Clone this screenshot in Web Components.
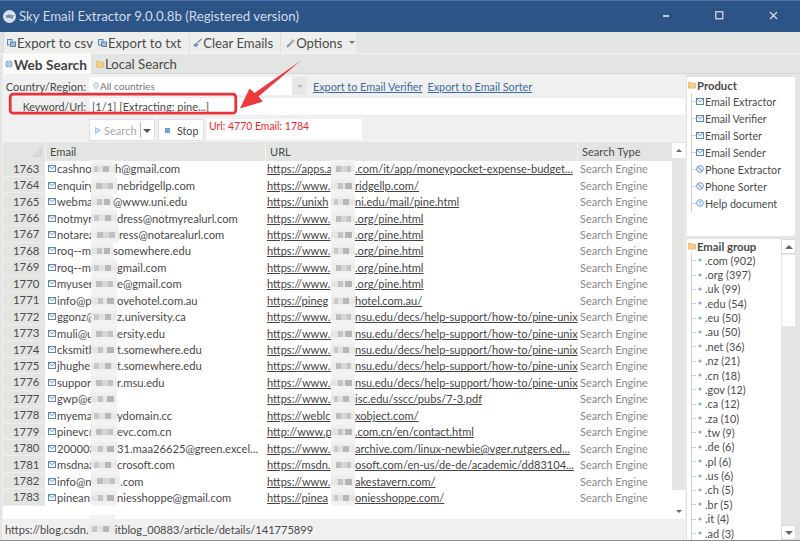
<!DOCTYPE html>
<html lang="en"><head><meta charset="utf-8"><title>Sky Email Extractor</title>
<style>
html,body{margin:0;padding:0;height:100%;overflow:hidden;background:#e3e5e2}
body{font:11.1px Lato,"Noto Sans",sans-serif;color:#4a4a4a}
</style></head><body>
<sky-window>
  <title-bar slot="title">Sky Email Extractor 9.0.0.8b (Registered version)</title-bar>
  <tool-bar slot="tools">
    <tool-button icon="export" style="--mr:5px">Export to csv</tool-button>
    <tool-button icon="export">Export to txt</tool-button>
    <tool-sep style="--l:8px;--r:3px"></tool-sep>
    <tool-button icon="brush">Clear Emails</tool-button>
    <tool-sep style="--l:7px;--r:5px"></tool-sep>
    <tool-button icon="wrench" caret>Options</tool-button>
  </tool-bar>
  <tab-strip slot="tabs"></tab-strip>
  <search-form slot="form"></search-form>
  <result-table slot="table"></result-table>
  <status-bar slot="status">https://blog.csdn.<mosaic-patch tall></mosaic-patch>itblog_00883/article/details/141775899</status-bar>
  <side-tree slot="product" heading="Product" style="--row:16.95px;--font:10.7px">
    <tree-item icon="mail">Email Extractor</tree-item>
    <tree-item icon="mail">Email Verifier</tree-item>
    <tree-item icon="mail">Email Sorter</tree-item>
    <tree-item icon="mail">Email Sender</tree-item>
    <tree-item icon="phone">Phone Extractor</tree-item>
    <tree-item icon="phone">Phone Sorter</tree-item>
    <tree-item icon="help">Help document</tree-item>
  </side-tree>
  <side-tree slot="group" heading="Email group" scroll style="--row:14.37px;--font:10.9px">
    <tree-item icon="dot">.com (902)</tree-item>
    <tree-item icon="dot">.org (397)</tree-item>
    <tree-item icon="dot">.uk (99)</tree-item>
    <tree-item icon="dot">.edu (54)</tree-item>
    <tree-item icon="dot">.eu (50)</tree-item>
    <tree-item icon="dot">.au (50)</tree-item>
    <tree-item icon="dot">.net (36)</tree-item>
    <tree-item icon="dot">.nz (21)</tree-item>
    <tree-item icon="dot">.cn (18)</tree-item>
    <tree-item icon="dot">.gov (12)</tree-item>
    <tree-item icon="dot">.ca (12)</tree-item>
    <tree-item icon="dot">.za (10)</tree-item>
    <tree-item icon="dot">.tw (9)</tree-item>
    <tree-item icon="dot">.de (6)</tree-item>
    <tree-item icon="dot">.pl (6)</tree-item>
    <tree-item icon="dot">.us (6)</tree-item>
    <tree-item icon="dot">.ch (5)</tree-item>
    <tree-item icon="dot">.br (5)</tree-item>
    <tree-item icon="dot">.it (4)</tree-item>
    <tree-item icon="dot">.ad (3)</tree-item>
  </side-tree>
  <call-out slot="overlay"></call-out>
</sky-window>
<script>
const ICONS={
 export:'<svg width="10" height="10" viewBox="0 0 10 10"><rect x=".5" y="1.5" width="4.5" height="5.5" fill="#dfe8f2" stroke="#5f87b5"/><rect x="3.5" y="4" width="5" height="4.5" fill="#9dbbdc" stroke="#5f87b5"/></svg>',
 brush:'<svg width="10" height="10" viewBox="0 0 10 10"><path d="M8.5 1 4.5 4.5" stroke="#7a93ae" stroke-width="1.6"/><path d="M.5 6.5 3.5 4.5 5.5 6.5 3.5 9 1 8.5Z" fill="#6f96c2"/></svg>',
 wrench:'<svg width="10" height="10" viewBox="0 0 10 10"><path d="M1 9 5.5 4.5" stroke="#8a97a6" stroke-width="1.8"/><path d="M4.5 3.5 6.5 1.2 8.5 2 8.1 4 6 5.4Z" fill="#a9b4c0"/></svg>',
 mail:'<svg width="8" height="7" viewBox="0 0 8 7"><rect x=".5" y=".5" width="7" height="6" fill="#f4f8fc" stroke="#5d86b3"/><path d="M.8 1 4 3.7 7.2 1" fill="none" stroke="#5d86b3" stroke-width=".8"/></svg>',
 phone:'<svg width="8" height="8" viewBox="0 0 8 8"><circle cx="4" cy="4" r="3.4" fill="#eaf1f9" stroke="#6f9ac9"/><path d="M2.6 2.2 3.4 3.6 4.6 5 5.8 5.4" fill="none" stroke="#4f79a8" stroke-width="1"/></svg>',
 help:'<svg width="8" height="8" viewBox="0 0 8 8"><circle cx="4" cy="4" r="3.4" fill="#eef5fb" stroke="#7ba7d3"/><path d="M3 3.1C3 2 5 2 5 3.1 5 3.9 4 3.9 4 4.8M4 5.6V6.3" fill="none" stroke="#5d8fc2" stroke-width=".8"/></svg>',
 dot:'<svg width="8" height="8" viewBox="0 0 8 8"><circle cx="4" cy="4" r="1.6" fill="#86aee0"/></svg>',
 folder:'<svg width="8" height="8" viewBox="0 0 9 8"><path d="M.5 1H3.4L4.2 2H8.5V7.5H.5Z" fill="#f6cf88" stroke="#e4b061" stroke-width=".8"/></svg>'
};
function shadow(el,html){el.attachShadow({mode:'open'}).innerHTML=html;return el.shadowRoot}
const def=(n,c)=>customElements.define(n,c);

def('sky-window',class extends HTMLElement{constructor(){super();shadow(this,`<style>
:host{display:flex;flex-direction:column;position:relative;width:800px;height:541px;overflow:hidden;background:#e3e5e2;box-sizing:border-box;border-bottom:1px solid #8c8c8c}
.work{flex:1;display:flex;min-height:0}
.left{width:684px;margin-left:2px;display:flex;flex-direction:column;background:#f0f0f0;min-height:0}
.right{width:110px;margin-left:1px;display:flex;flex-direction:column;padding-top:3px;gap:3px;min-height:0}
</style><slot name="title"></slot><slot name="tools"></slot><slot name="tabs"></slot>
<div class="work"><div class="left"><slot name="form"></slot><slot name="table"></slot><slot name="status"></slot></div>
<div class="right"><slot name="product"></slot><slot name="group"></slot></div></div><slot name="overlay"></slot>`)}});

def('title-bar',class extends HTMLElement{constructor(){super();shadow(this,`<style>
:host{display:flex;align-items:center;height:32px;box-sizing:border-box;flex:none;background:#2c5487;border-top:1px solid #5572a6;color:#cfdbe9;font-size:13.27px;padding:0 0 1px 3px;gap:3px;white-space:nowrap}
.t{flex:1}
.b{width:50px;display:flex;justify-content:center;align-items:center;margin-top:-2px}
.logo{font:bold 5px "Liberation Sans",sans-serif;color:#2c5487;background:#d9e3ef;border-radius:50%;width:13px;height:13px;display:flex;align-items:center;justify-content:center;letter-spacing:-.2px}
</style><span class="logo">sky</span><span class="t"><slot></slot></span>
<span class="b"><svg width="7" height="3"><rect y="1" width="6" height="2" fill="#c3d0e0"/></svg></span>
<span class="b"><svg width="9" height="9"><rect x=".75" y=".75" width="7" height="7" fill="none" stroke="#c3d0e0" stroke-width="1.4"/></svg></span>
<span class="b" style="width:53px"><svg width="9" height="9"><path d="M1 1 8 8M8 1 1 8" stroke="#d5dfeb" stroke-width="1.2"/></svg></span>`)}});

def('tool-bar',class extends HTMLElement{constructor(){super();shadow(this,`<style>
:host{display:block;height:21px;flex:none;box-sizing:content-box;border-bottom:1px solid #f4f5f3;padding-top:0}
.g{display:inline-flex;align-items:center;height:21px;margin-left:3px;padding:0 1px 0 3px;background:#eeeeec;border-left:1px solid #d8d8d8;font-size:13.15px;color:#4a4a4a;box-sizing:border-box}
</style><div class="g"><slot></slot></div>`)}});
def('tool-sep',class extends HTMLElement{constructor(){super();shadow(this,`<style>:host{display:block;width:1px;height:20px;background:#dedfdc;margin:0 var(--r,3px) 0 var(--l,8px)}</style>`)}});
def('tool-button',class extends HTMLElement{constructor(){super();const i=this.getAttribute('icon');shadow(this,`<style>
:host{display:flex;align-items:center;white-space:nowrap;margin-right:var(--mr,0)}
svg{display:block;flex:none}.c{margin-left:7px;border:3px solid transparent;border-top-color:#777;border-bottom:0;width:0;height:0}
</style>${ICONS[i]}<slot></slot>${this.hasAttribute('caret')?'<span class="c"></span>':''}`)}});

def('tab-strip',class extends HTMLElement{constructor(){super();shadow(this,`<style>
:host{display:flex;height:19px;flex:none;padding-left:3px;border-bottom:1px solid #d6d7d5;font-size:13.2px;color:#4a4a4a}
.t{display:flex;align-items:center;height:20px;white-space:nowrap}
.a{background:#fbfbfa;font-weight:700;color:#444;margin-right:1px;font-size:13.7px;width:88px;padding-left:2px;gap:1px;box-sizing:border-box}
.l{padding-left:4px;gap:1px}
</style><div class="t a"><svg width="8" height="8" viewBox="0 0 8 8"><circle cx="4" cy="4" r="3.6" fill="#7aa6d8"/><path d="M.4 4H7.6M4 .4C2.4 2 2.4 6 4 7.6M4 .4C5.6 2 5.6 6 4 7.6" stroke="#e4eef8" stroke-width=".7" fill="none"/></svg>Web Search</div>
<div class="t l">${ICONS.folder}Local Search</div>`)}});

def('search-form',class extends HTMLElement{constructor(){super();shadow(this,`<style>
:host{display:flex;flex-direction:column;flex:none;height:68px;box-sizing:border-box;padding-top:3px;font-size:11.1px;color:#4a4a4a}
.r{display:flex;align-items:center;white-space:nowrap}
label{width:84px;text-align:right;margin-right:3px;font-size:11.1px}
.r2 label{font-size:10.7px}
.r1{height:18px}.r2{height:20px;margin-top:1px}
.sel{width:218px;height:18px;background:#fff;display:flex;align-items:center;font-size:10px;color:#777;box-sizing:border-box;padding-left:4px;gap:1px}
.sel span{flex:1}
.ar{width:15px;height:18px;background:#e6e7e6;display:flex;align-items:center;justify-content:center}
.tri{border:3px solid transparent;border-top-color:#bbb;border-bottom:0}
a{color:#3a6aa6;text-decoration:underline;margin-left:6px;font-size:10.8px}
a+a{margin-left:5px}
.inp{flex:1;height:19px;background:#fff;display:flex;align-items:center;padding-left:2px;border:1px solid #ececec;box-sizing:border-box;font-size:11px}
.r3{margin-top:3px;margin-left:87px;gap:3px;height:22px;align-items:stretch}
.btn{background:#fff;border:1px solid #dfe0df;box-sizing:border-box;display:flex;align-items:center;font-size:11.1px}
.s{width:66px;color:#aaa;padding-left:5px;gap:3px;position:relative}
.s i{position:absolute;right:13px;top:2px;bottom:2px;width:1px;background:#bbb}
.s b{position:absolute;right:3px;top:9px;border:4px solid transparent;border-top-color:#555;border-bottom:0}
.x{width:46px;padding-left:6px;gap:7px;color:#444;font-size:10.7px}
.msg{width:155px;height:21px;background:#fff;color:#f0282c;padding:0 2px;font-size:10.45px;line-height:15px;box-sizing:border-box}
</style>
<div class="r r1"><label>Country/Region:</label><div class="sel"><svg width="6" height="8" viewBox="0 0 6 8"><path d="M3 7.6C1.4 5.6.5 4.4.5 3a2.5 2.5 0 0 1 5 0c0 1.4-.9 2.6-2.5 4.6Z" fill="#d8e6f2" stroke="#a9c4dc" stroke-width=".7"/></svg><span>All countries</span><div class="ar"><div class="tri"></div></div></div><a>Export to Email Verifier</a><a>Export to Email Sorter</a></div>
<div class="r r2"><label>Keyword/Url:</label><div class="inp">[1/1] [Extracting: pine...]</div></div>
<div class="r r3"><div class="btn s"><svg width="6" height="7" viewBox="0 0 6 7"><path d="M.5.5 5.5 3.5.5 6.5Z" fill="#cfe0f1" stroke="#8db0d4" stroke-width=".7"/></svg>Search<i></i><b></b></div><div class="btn x"><svg width="5" height="5"><rect width="5" height="5" fill="#6f9fd6"/></svg>Stop</div><div class="msg">Url: 4770 Email: 1784</div></div>`)}});

def('mosaic-patch',class extends HTMLElement{constructor(){super();const tall=this.hasAttribute('tall');const n=(+this.getAttribute('v')||0)%3;
const g=['#e9e9e9 0 12%,#c9c9c9 12% 30%,#e2e2e2 30% 52%,#b8b8b8 52% 76%,#e8e8e8 76%','#ededed 0 20%,#bdbdbd 20% 42%,#d7d7d7 42% 66%,#c2c2c2 66% 84%,#ececec 84%','#e4e4e4 0 28%,#c4c4c4 28% 48%,#e8e8e8 48% 60%,#b5b5b5 60% 88%,#eee 88%'][n];
shadow(this,`<style>
:host{display:inline-block;position:relative;width:var(--w,26px);height:1em;vertical-align:-2px;flex:none}
div{position:absolute;left:0;right:0;top:${tall?'-9px':'-3px'};bottom:${tall?'-10px':'-3px'};background:linear-gradient(90deg,${g}) 0 ${tall?'11px':'6px'}/100% 6px no-repeat,linear-gradient(#f4f4f4,#ececec 40%,#f4f4f4);filter:blur(.5px)}
</style><div></div>`)}});

const EMAILS=[['cashno','h@gmail.com',24],['enquiry','nebridgellp.com'],['webma','@www.uni.edu',22],['notmyr','dress@notmyrealurl.com'],['notarea','ress@notarealurl.com',28],['roq--m','somewhere.edu',22],['roq--m','gmail.com'],['myuser','e@gmail.com'],['info@p','ovehotel.com.au'],['ggonz@','z.university.ca'],['muli@u','ersity.edu'],['cksmith','t.somewhere.edu'],['jhughe','t.somewhere.edu'],['suppor','r.msu.edu'],['gwp@e',''],['myema','ydomain.cc'],['pinevc@','evc.com.cn'],['200003','31.maa26625@green.excel...'],['msdnaa','crosoft.com'],['info@n','.com',29],['pinean','niesshoppe@gmail.com']];
const H='https://www.';
const URLS=[['https://apps.a','.com/it/app/moneypocket-expense-budget...'],[H,'ridgellp.com/'],['https://unixh','ni.edu/mail/pine.html'],[H,'.org/pine.html'],[H,'.org/pine.html'],[H,'.org/pine.html'],[H,'.org/pine.html'],[H,'.org/pine.html'],['https://pineg','hotel.com.au/'],
[H+'e','nsu.edu/decs/help-support/how-to/pine-unix'],[H+'e','nsu.edu/decs/help-support/how-to/pine-unix'],[H+'e','nsu.edu/decs/help-support/how-to/pine-unix'],[H+'e','nsu.edu/decs/help-support/how-to/pine-unix'],[H+'e','nsu.edu/decs/help-support/how-to/pine-unix'],[H+'s','isc.edu/sscc/pubs/7-3.pdf'],['https://weblc','xobject.com/'],['http://www.p','.com.cn/en/contact.html'],[H+'m','archive.com/linux-newbie@vger.rutgers.ed...'],['https://msdn.','osoft.com/en-us/de-de/academic/dd83104...'],[H,'akestavern.com/'],['https://pinea','oniesshoppe.com/']];

def('result-table',class extends HTMLElement{constructor(){super();
const rows=EMAILS.map((e,i)=>{const u=URLS[i];return `<div class="row"><div class="n">${1763+i}</div><div class="e">${ICONS.mail}<span class="pre">${e[0]}</span><mosaic-patch v="${i}" style="--w:${e[2]||26}px"></mosaic-patch><span>${e[1]}</span></div><div class="u"><span class="upre">${u[0]}</span><mosaic-patch v="${i+1}" style="--w:24px"></mosaic-patch><span class="ul">${u[1]}</span></div><div class="t">Search Engine</div></div>`}).join('');
shadow(this,`<style>
:host{display:flex;flex:1;min-height:0;margin-left:1px;font-size:11.2px;color:#4a4a4a;--c:42px 220px 312px 95px}
.main{width:669px;background:#fff;display:flex;flex-direction:column;overflow:hidden}
.head{display:grid;grid-template-columns:var(--c);height:18.5px;flex:none;background:#e3e5e2;align-items:center;font-size:11.1px}
.head div{padding-left:4px;border-left:1px solid #f3f3f2;height:100%;display:flex;align-items:center;box-sizing:border-box}
.head .c{border:0;padding:0;justify-content:flex-end;padding-right:3px}
.row{display:grid;grid-template-columns:var(--c);height:16.45px;align-items:center;white-space:nowrap}
.n{background:#e3e5e2;height:100%;display:flex;align-items:center;padding-left:10px;box-sizing:border-box;font-size:11.4px;border-bottom:1px solid #eeeeec}
.e{display:flex;align-items:center;padding-left:3px;min-width:0}.e svg{margin-right:1px;flex:none}
.pre{width:34px;flex:none}
.u{display:flex;align-items:center;padding-left:2px;color:#444;font-size:11.07px;min-width:0}
.upre{width:64px;flex:none;text-decoration:underline}.ul{text-decoration:underline}
.t{color:#8a8a8a;padding-left:3px;font-size:11.03px}
.bar{width:13px;flex:none;background:#e3e5e2;display:flex;flex-direction:column}
.btn{height:15px;background:#fff;display:flex;align-items:center;justify-content:center;margin-top:1px}
.up{border:3.5px solid transparent;border-bottom-color:#666;border-top:0}.dn{border:3.5px solid transparent;border-top-color:#666;border-bottom:0}
.th{height:14px;background:#fff;margin-top:auto}.end{margin-top:0;height:15px}
</style><div class="main"><div class="head"><div class="c"><svg width="11" height="11"><path d="M11 0V11H0Z" fill="#d6d8d5"/></svg></div><div>Email</div><div>URL</div><div>Search Type</div></div>${rows}</div>
<div class="bar"><div class="btn"><div class="up"></div></div><div class="th"></div><div class="btn end"><div class="dn"></div></div></div>`)}});

def('status-bar',class extends HTMLElement{constructor(){super();shadow(this,`<style>
:host{display:flex;align-items:center;height:21px;flex:none;padding-left:3px;font-size:11.1px;color:#4a4a4a;white-space:nowrap;background:#f0f0f0}
</style><slot></slot>`)}});

def('side-tree',class extends HTMLElement{constructor(){super();const s=this.hasAttribute('scroll');shadow(this,`<style>
:host{display:flex;${s?'flex:1;min-height:0;width:109px;':'height:159px;flex:none;width:108px;'}overflow:hidden}
.body{flex:1;background:#fff;overflow:hidden;min-width:0}
.h{display:flex;align-items:center;gap:1px;height:${s?'14px':'16px'};font-weight:700;font-size:11.3px;color:#4a4a4a;padding-left:1px}
.bar{width:15px;background:#e3e5e2;display:flex;flex-direction:column;flex:none}
.b{height:15px;background:#fff;border:1px solid #dcdcdc;box-sizing:border-box;display:flex;align-items:center;justify-content:center}
.up{border:4px solid transparent;border-bottom-color:#666;border-top:0}.dn{border:4px solid transparent;border-top-color:#666;border-bottom:0}
.th{height:73px;background:#fff;border:1px solid #e8e8e8;box-sizing:border-box;margin-bottom:auto}
</style><div class="body"><div class="h">${ICONS.folder}${this.getAttribute('heading')}</div><slot></slot></div>
${s?'<div class="bar"><div class="b"><div class="up"></div></div><div class="th"></div><div class="b"><div class="dn"></div></div></div>':''}`)}});
def('tree-item',class extends HTMLElement{constructor(){super();shadow(this,`<style>
:host{display:flex;align-items:center;position:relative;height:var(--row,17px);padding-left:9px;gap:1px;font-size:var(--font,10.7px);color:#4c4c4c;white-space:nowrap}
:host::before{content:"";position:absolute;left:4px;top:0;bottom:0;border-left:1px solid #cfcfcf}
:host::after{content:"";position:absolute;left:5px;top:50%;width:4px;border-top:1px solid #cfcfcf}
svg{display:block;flex:none;position:relative}
</style>${ICONS[this.getAttribute('icon')]}<slot></slot>`)}});

def('call-out',class extends HTMLElement{constructor(){super();shadow(this,`<style>
:host{position:absolute;inset:0;pointer-events:none;display:block}svg{display:block}
</style><svg width="800" height="541"><rect x="10.2" y="94.2" width="225.6" height="19" rx="3" fill="none" stroke="#e8333a" stroke-width="2.8"/>
<path d="M301 60.5 258.5 96.5 263 101.5 240 108.5 249.5 88.5 254.5 93Z" fill="#ee3a3f"/></svg>`)}});
</script>
</body></html>
